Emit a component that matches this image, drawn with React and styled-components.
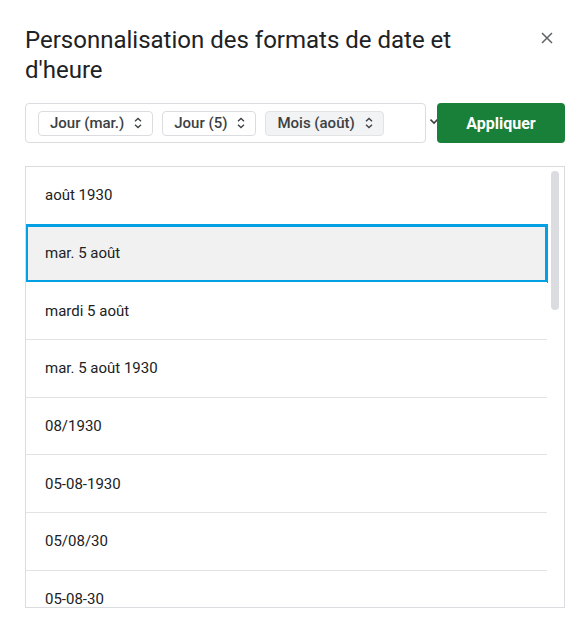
import React from 'react';
import styled, { createGlobalStyle } from 'styled-components';

const formats = [
    'août 1930',
    'mar. 5 août',
    'mardi 5 août',
    'mar. 5 août 1930',
    '08/1930',
    '05-08-1930',
    '05/08/30',
    '05-08-30',
];

const chips = [
    { label: 'Jour (mar.)' },
    { label: 'Jour (5)' },
    { label: 'Mois (août)', active: true },
];

function UpDownIcon() {
    return (
        <svg width="8" height="12" viewBox="0 0 8 12" fill="none">
            <path d="M1 4.2 L4 1.4 L7 4.2" stroke="#3c4043" strokeWidth="1.3" />
            <path d="M1 7.8 L4 10.6 L7 7.8" stroke="#3c4043" strokeWidth="1.3" />
        </svg>
    )
}

function CloseIcon() {
    return (
        <svg width="12" height="12" viewBox="0 0 12 12" fill="none">
            <path d="M1 1 L11 11 M11 1 L1 11" stroke="#5f6368" strokeWidth="1.5" />
        </svg>
    )
}

export default function App() {
    return (
        <>
            <GlobalStyle />
            <Dialog>
                <Header>
                    <Title>Personnalisation des formats de date et d'heure</Title>
                    <CloseButton aria-label="Fermer">
                        <CloseIcon />
                    </CloseButton>
                </Header>

                <Toolbar>
                    <FormatInput>
                        {chips.map(chip => (
                            <Chip key={chip.label} active={chip.active}>
                                {chip.label}
                                <UpDownIcon />
                            </Chip>
                        ))}
                    </FormatInput>
                    <DropChevron>
                        <svg width="7" height="8" viewBox="0 0 7 8" fill="none">
                            <path d="M0.5 1.5 L4 5 L7.5 1.5" stroke="#3c4043" strokeWidth="1.6" />
                        </svg>
                    </DropChevron>
                    <ApplyButton>Appliquer</ApplyButton>
                </Toolbar>

                <List>
                    <Rows>
                        {formats.map((f, i) => (
                            <Row key={f} selected={i === 1}>{f}</Row>
                        ))}
                    </Rows>
                    <ScrollTrack>
                        <ScrollThumb />
                    </ScrollTrack>
                </List>
            </Dialog>
        </>
    )
}

const GlobalStyle = createGlobalStyle`
    body {
        margin: 0;
        background: #ffffff;
        font-family: Roboto, "Liberation Sans", sans-serif;
    }
`

const Dialog = styled.div`
    width: 587px;
    height: 632px;
    box-sizing: border-box;
    padding: 25px 22px 0 25px;
    display: flex;
    flex-direction: column;
`

const Header = styled.div`
    display: flex;
    justify-content: space-between;
    align-items: flex-start;
`

const Title = styled.h1`
    margin: 0;
    max-width: 470px;
    font-family: Roboto, "Liberation Sans", sans-serif;
    font-size: 24px;
    font-weight: 400;
    line-height: 30px;
    color: #202124;
`

const CloseButton = styled.button`
    border: none;
    background: none;
    padding: 0;
    margin: 7px 12px 0 0;
    display: flex;
    cursor: pointer;
`

const Toolbar = styled.div`
    display: flex;
    align-items: center;
    margin-top: 18px;
    height: 40px;
`

const FormatInput = styled.div`
    width: 401px;
    height: 40px;
    box-sizing: border-box;
    border: 1px solid #dadce0;
    border-radius: 4px;
    padding: 0 12px;
    display: flex;
    align-items: center;
    gap: 9px;
`

const Chip = styled.span`
    height: 25px;
    box-sizing: border-box;
    display: inline-flex;
    align-items: center;
    gap: 10px;
    padding: 0 10px 0 11px;
    border: 1px solid ${p => p.active ? '#e3e3e3' : '#dadce0'};
    background: ${p => p.active ? '#f1f3f4' : '#ffffff'};
    border-radius: 4px;
    font-size: 15px;
    font-weight: 500;
    color: #3c4043;
    white-space: nowrap;
`

const DropChevron = styled.span`
    width: 11px;
    display: flex;
    justify-content: flex-end;
    overflow: hidden;
    padding-bottom: 2px;
`

const ApplyButton = styled.button`
    width: 128px;
    height: 40px;
    border: none;
    border-radius: 4px;
    background: #188038;
    color: #ffffff;
    font-family: Roboto, "Liberation Sans", sans-serif;
    font-size: 16px;
    font-weight: 700;
    cursor: pointer;
`

const List = styled.div`
    margin-top: 23px;
    width: 540px;
    height: 442px;
    box-sizing: border-box;
    border: 1px solid #dadce0;
    display: flex;
    overflow: hidden;
`

const Rows = styled.div`
    flex: 1;
    display: flex;
    flex-direction: column;
`

const Row = styled.div`
    flex: 0 0 auto;
    height: 57.7px;
    box-sizing: border-box;
    display: flex;
    align-items: center;
    padding-left: 19px;
    font-size: 15px;
    color: #202124;
    border-bottom: 1px solid ${p => p.selected ? 'transparent' : '#e3e3e3'};
    background: ${p => p.selected ? '#f1f1f1' : '#ffffff'};
    outline: ${p => p.selected ? '3px solid #03a1e3' : 'none'};
    outline-offset: -2px;
`

const ScrollTrack = styled.div`
    width: 17px;
    padding: 4px 5px 0 4px;
    box-sizing: border-box;
`

const ScrollThumb = styled.div`
    width: 8px;
    height: 139px;
    border-radius: 4px;
    background: #dadce0;
`
